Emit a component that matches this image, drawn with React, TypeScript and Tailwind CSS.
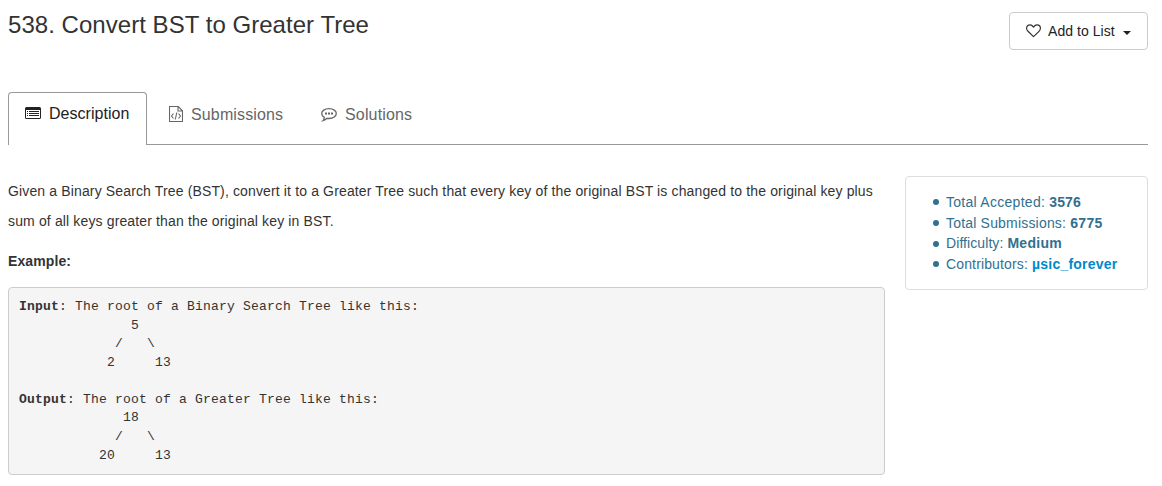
import React from "react";

function HeartIcon() {
  return (
    <svg width="15" height="14" viewBox="0 0 15 14" fill="none" stroke="#333" strokeWidth="1.2" strokeLinejoin="round">
      <path d="M7.5 12.6 2 7.3C.9 6.2.6 5.2.6 4.2.6 2.1 2 .9 4 .9c1.600 0 2.600 1 3.500 2.100C8.400 1.900 9.400.9 11 .9c2 0 3.400 1.200 3.400 3.300 0 1-.3 2-1.400 3.100Z" />
    </svg>
  );
}

function ListIcon() {
  return (
    <svg width="17" height="13" viewBox="0 0 17 13" fill="#222">
      <path fillRule="evenodd" d="M1.500 0h13a1.500 1.500 0 0 1 1.500 1.500v9a1.500 1.500 0 0 1-1.500 1.500h-13A1.500 1.500 0 0 1 0 10.500v-9A1.500 1.500 0 0 1 1.500 0ZM1 3v8h14V3Z" />
      <path d="M2 4h1v1H2zM4 4h10v1H4zM2 6h1v1H2zM4 6h10v1H4zM2 8h1v1H2zM4 8h10v1H4z" />
    </svg>
  );
}

function CodeFileIcon() {
  return (
    <svg width="14" height="16" viewBox="0 0 14 16" fill="none" stroke="#666" strokeWidth="1.1">
      <path d="M.5.5h8.700l4.300 4.300v10.700H.5ZM9 .5V5h4.500" />
      <path d="M4.500 7.500 2.500 10 4.500 12.500M9.500 7.500l2 2.500-2 2.500M7.800 6.500l-1.500 7" />
    </svg>
  );
}

function CommentIcon() {
  return (
    <svg width="16" height="14" viewBox="0 0 16 14" fill="none" stroke="#666" strokeWidth="1.300">
      <path d="M8 .7c4.200 0 7.300 2.200 7.300 4.900S12.200 10.500 8 10.500q-1 0-1.900-.2-1.700 1.800-4.100 2.300 1.200-1.200 1.300-3.300C1.600 8.500.7 7.100.7 5.600.7 2.900 3.800.7 8 .7Z" />
      <path d="M4 5.500h2M7 5.500h2M10 5.500h2" strokeWidth="2" />
    </svg>
  );
}

const stats = [
  { label: "Total Accepted:", value: "3576", labelClass: "tracking-[0.28px]", valueClass: "tracking-[0.1px]" },
  { label: "Total Submissions:", value: "6775", labelClass: "tracking-[0.19px]", valueClass: "tracking-[0.3px]" },
  { label: "Difficulty:", value: "Medium", labelClass: "tracking-[0.08px]", valueClass: "tracking-[0.3px]" },
  { label: "Contributors:", value: "µsic_forever", labelClass: "tracking-[0.14px]", valueClass: "tracking-[0.22px] text-[#0088cc]" },
];

const inputTree = `
              5
            /   \\
           2     13

`;

const outputTree = `
             18
            /   \\
          20     13`;

export default function App() {
  return (
    <main className="h-[486px] overflow-hidden bg-white pr-[14px] pl-2 font-['Liberation_Sans',Arial,sans-serif] text-[14px] text-[#333]">
      <header className="flex h-[92px] items-start justify-between">
        <h1 className="pt-[9px] text-[24px] leading-8 tracking-[0.04px] whitespace-nowrap">538. Convert BST to Greater Tree</h1>
        <button className="mt-3 flex h-[38px] w-[139px] items-center rounded-[4px] border border-[#ccc] pl-4 whitespace-nowrap">
          <HeartIcon />
          <span className="ml-[7px] pt-px tracking-[0.05px] text-[#222]">Add to List</span>
          <span className="mt-[3px] ml-2 border-x-4 border-t-4 border-x-transparent border-t-[#222]" />
        </button>
      </header>

      <nav className="flex h-[53px] items-stretch border-b border-[#999] text-[16px] whitespace-nowrap text-[#666]">
        <a className="-mb-px flex w-[139px] items-start rounded-t-[4px] border border-b-0 border-[#999] bg-white pt-[9px] pl-4 leading-6 text-[#222]">
          <span className="mt-[5px]"><ListIcon /></span>
          <span className="ml-[7px] tracking-[0.03px]">Description</span>
        </a>
        <a className="flex w-[152px] items-start pt-[11px] pl-[22px] leading-6">
          <span className="mt-[3px]"><CodeFileIcon /></span>
          <span className="ml-2 tracking-[0.14px]">Submissions</span>
        </a>
        <a className="flex items-start pt-[11px] pl-[22px] leading-6">
          <span className="mt-[5px]"><CommentIcon /></span>
          <span className="ml-2 tracking-[0.16px]">Solutions</span>
        </a>
      </nav>

      <div className="flex items-start gap-5 pt-[31px]">
        <section className="w-[877px] shrink-0">
          <p className="leading-[30px] tracking-[0.14px] whitespace-nowrap">
            Given a Binary Search Tree (BST), convert it to a Greater Tree such that every key of the original BST is changed to the original key plus
            <br />
            sum of all keys greater than the original key in BST.
          </p>
          <p className="mt-[10px] leading-[30px] font-bold tracking-[0.1px]">Example:</p>
          <pre className="mt-[11px] h-[188px] rounded-[4px] border border-[#ccc] bg-[#f5f5f5] px-[10px] pt-[10px] font-['Liberation_Mono','Courier_New',monospace] text-[13px] leading-[18.570px] tracking-[0.2px]">
            <b>Input</b>: The root of a Binary Search Tree like this:{inputTree}
            <b>Output</b>: The root of a Greater Tree like this:{outputTree}
          </pre>
        </section>

        <aside className="h-[114px] w-[243px] rounded-[4px] border border-[#ddd] pt-[15px] pl-[27px] text-[#31708f]">
          <ul className="leading-[20.700px] whitespace-nowrap">
            {stats.map((s) => (
              <li key={s.label} className="flex items-center">
                <span className="mr-[7px] size-[6px] rounded-full bg-[#31708f]" />
                <span className={s.labelClass}>{s.label}&nbsp;</span>
                <b className={s.valueClass}>{s.value}</b>
              </li>
            ))}
          </ul>
        </aside>
      </div>
    </main>
  );
}
